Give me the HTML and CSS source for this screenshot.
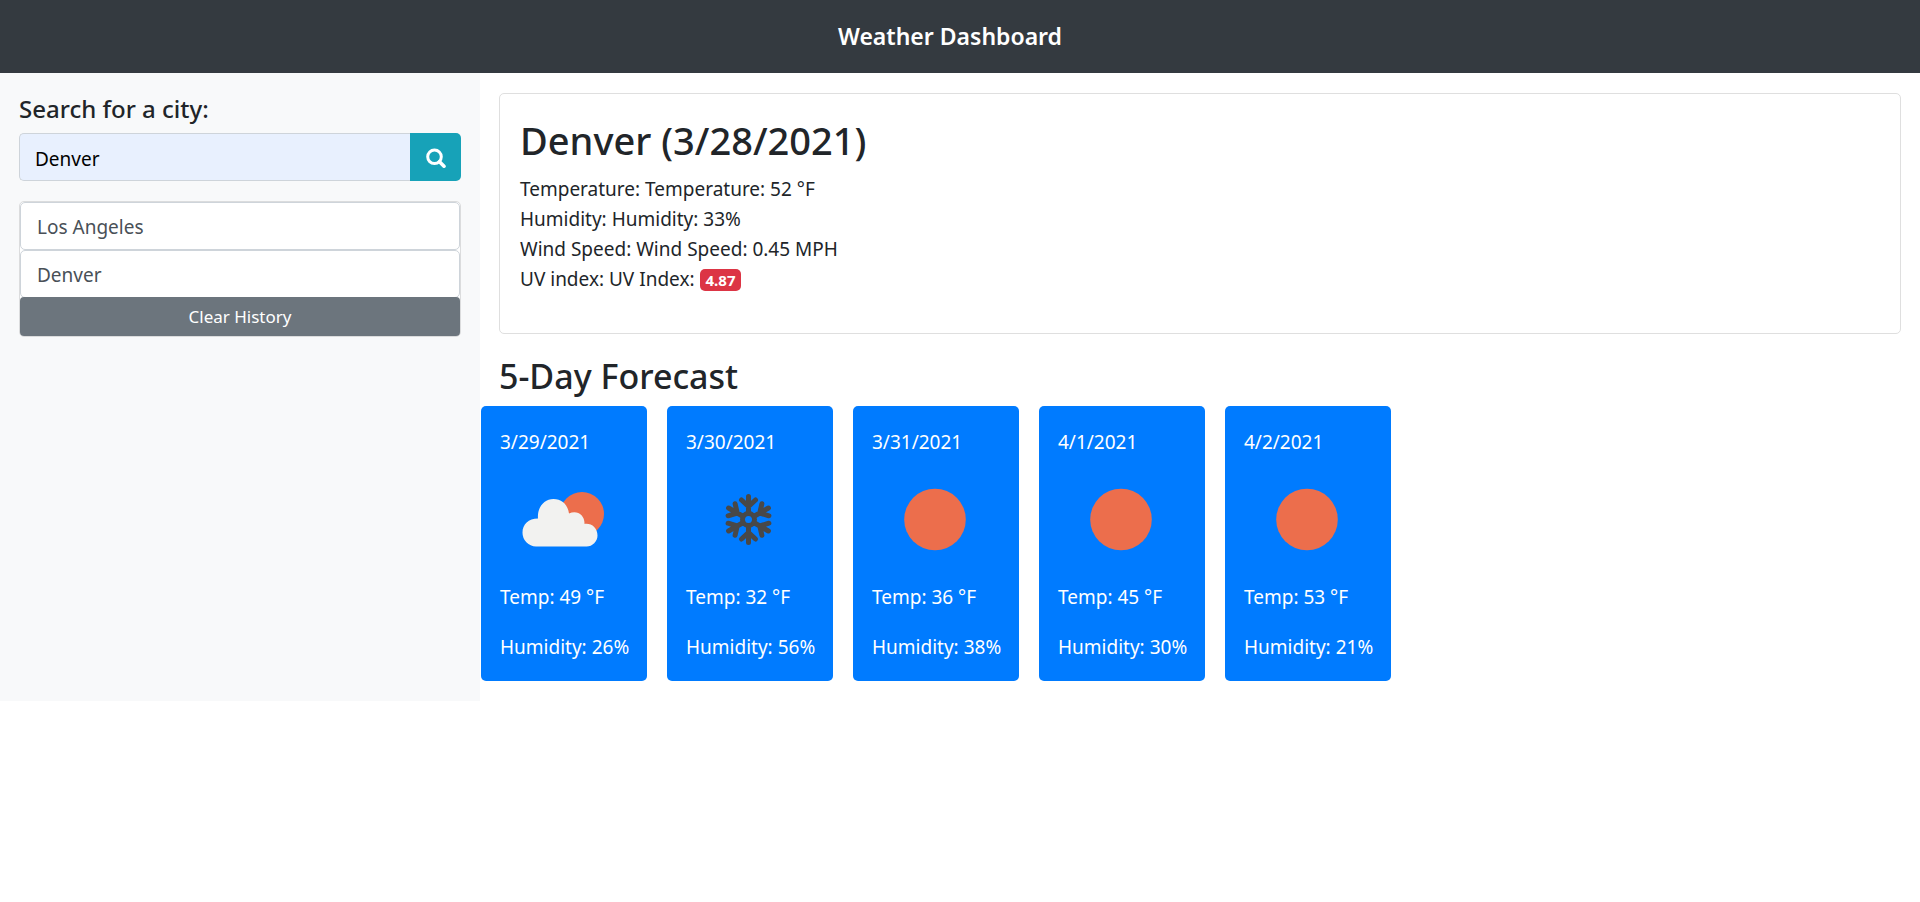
FILE: index.html
```html
<!DOCTYPE html>
<html lang="en">
<head>
<meta charset="utf-8">
<meta name="viewport" content="width=device-width, initial-scale=1">
<title>Weather Dashboard</title>
<link rel="stylesheet" href="styles.css">
</head>
<body>
<svg class="sprite" aria-hidden="true">
  <symbol id="sun" viewBox="0 0 125 125"><circle cx="63" cy="62.500" r="30.800" fill="#ec6e4c"/></symbol>
  <symbol id="cloud" viewBox="0 0 125 125">
    <circle cx="82" cy="57" r="22" fill="#ec6e4c"/>
    <path fill="#f2f2f0" d="M36 89.500a13.800 13.800 0 0 1-13.500-14c0-8 6-14 15.500-14-1-11 6-19.500 15.500-19.500 8.500 0 14.500 6 15.500 14.500 8-4 16 1.500 15.500 10.500 7-1 13 4 13 11.500 0 6-5 11-11 11z"/>
  </symbol>
  <symbol id="snow" viewBox="0 0 125 125">
    <g fill="none" stroke="#484848" stroke-width="5" stroke-linecap="round">
      <circle cx="62.500" cy="62.500" r="6" stroke-width="5"/>
      <path id="arm" d="M62.500 56V39.500M62.500 49.500l-7-6.500M62.500 49.500l7-6.500"/>
      <use href="#arm" transform="rotate(60 62.500 62.500)"/>
      <use href="#arm" transform="rotate(120 62.500 62.500)"/>
      <use href="#arm" transform="rotate(180 62.500 62.500)"/>
      <use href="#arm" transform="rotate(240 62.500 62.500)"/>
      <use href="#arm" transform="rotate(300 62.500 62.500)"/>
    </g>
  </symbol>
</svg>

<header class="navbar"><h1 class="brand">Weather Dashboard</h1></header>

<div class="layout">
  <aside class="sidebar">
    <form class="search">
      <label class="search-label" for="city">Search for a city:</label>
      <div class="search-group">
        <input class="search-input" id="city" type="text" value="Denver">
        <button class="search-button" type="button" aria-label="Search">
          <svg class="search-icon" viewBox="0 0 20 20" aria-hidden="true"><g fill="none" stroke="currentColor"><circle cx="8.500" cy="8.800" r="6.800" stroke-width="3"/><path d="M13.500 13.800 18 18.200" stroke-width="3.600" stroke-linecap="round"/></g></svg>
        </button>
      </div>
    </form>
    <div class="history">
      <input class="history-item" type="text" readonly aria-label="Recent city 1" value="Los Angeles">
      <input class="history-item" type="text" readonly aria-label="Recent city 2" value="Denver">
      <button class="clear-button" type="button">Clear History</button>
    </div>
  </aside>

  <main class="content">
    <section class="current">
      <h2 class="city">Denver (3/28/2021)</h2>
      <p class="reading">Temperature: Temperature: 52 °F</p>
      <p class="reading">Humidity: Humidity: 33%</p>
      <p class="reading">Wind Speed: Wind Speed: 0.45 MPH</p>
      <p class="reading">UV index: UV Index: <span class="badge">4.87</span></p>
    </section>
    <h2 class="forecast-title">5-Day Forecast</h2>
    <section class="forecast">
      <article class="day"><p>3/29/2021</p><svg class="icon" role="img" aria-label="Partly cloudy"><use href="#cloud"/></svg><p>Temp: 49 °F</p><p class="humidity">Humidity: 26%</p></article>
      <article class="day"><p>3/30/2021</p><svg class="icon" role="img" aria-label="Snow"><use href="#snow"/></svg><p>Temp: 32 °F</p><p class="humidity">Humidity: 56%</p></article>
      <article class="day"><p>3/31/2021</p><svg class="icon" role="img" aria-label="Clear"><use href="#sun"/></svg><p>Temp: 36 °F</p><p class="humidity">Humidity: 38%</p></article>
      <article class="day"><p>4/1/2021</p><svg class="icon" role="img" aria-label="Clear"><use href="#sun"/></svg><p>Temp: 45 °F</p><p class="humidity">Humidity: 30%</p></article>
      <article class="day"><p>4/2/2021</p><svg class="icon" role="img" aria-label="Clear"><use href="#sun"/></svg><p>Temp: 53 °F</p><p class="humidity">Humidity: 21%</p></article>
    </section>
  </main>
</div>
</body>
</html>
```
FILE: styles.css
```css
* { box-sizing: border-box; }
body {
  margin: 0;
  background: #fff;
  color: #212529;
  font: 400 19px/30px "Segoe UI", "Noto Sans", sans-serif;
}
h1, h2, p { margin: 0; }
input, button { font: inherit; margin: 0; }
.sprite { position: absolute; width: 0; height: 0; }

.navbar {
  background: #343a40;
  color: #fff;
  padding: 21px 40px 22px 20px;
  text-align: center;
}
.brand { font-size: 23px; line-height: 30px; font-weight: 600; }

.layout { display: flex; align-items: stretch; }
.sidebar { flex: 0 0 25%; background: #f8f9fa; padding: 20px 19px; }
.content { flex: 1; min-width: 0; padding: 20px 19px; }

.search-label {
  display: block;
  font-size: 24px;
  line-height: 32px;
  font-weight: 500;
  margin-bottom: 8px;
}
.search-group { display: flex; }
.search-input {
  flex: 1;
  min-width: 0;
  height: 48px;
  padding: 4px 15px 0;
  border: 1px solid #ced4da;
  border-right: 0;
  border-radius: 5px 0 0 5px;
  background: #e8f0fe;
  color: #000;
}
.search-button {
  display: flex;
  align-items: center;
  justify-content: center;
  width: 51px;
  padding: 2px 0 0;
  border: 0;
  border-radius: 0 5px 5px 0;
  background: #17a2b8;
  color: #fff;
}
.search-icon { width: 20px; height: 20px; }

.history {
  display: flex;
  flex-direction: column;
  margin-top: 20px;
  border: 1px solid #dbdcdd;
  border-radius: 5px;
  background: #fff;
}
.history-item {
  width: 100%;
  height: 48px;
  padding: 2px 16px 0;
  border: 1px solid #ced4da;
  border-radius: 5px;
  background: #fff;
  color: #495057;
}
.clear-button {
  height: 39px;
  margin-top: -1px;
  border: 0;
  border-radius: 4px;
  background: #6c757d;
  color: #fff;
  font-size: 17px;
}

.current {
  padding: 20px 20px 39px;
  border: 1px solid #dfdfdf;
  border-radius: 5px;
}
.city { font-size: 38px; line-height: 52px; font-weight: 500; margin-bottom: 8px; }
.badge {
  display: inline-block;
  padding: 4px 6px;
  border-radius: 5px;
  background: #dc3545;
  color: #fff;
  font-size: 15px;
  line-height: 14px;
  font-weight: 700;
}

.forecast-title { margin: 20px 0 8px; font-size: 34px; line-height: 44px; font-weight: 500; }
.forecast { display: flex; flex-wrap: wrap; gap: 20px; margin-left: -18px; }
.day {
  width: 166px;
  padding: 21px 0 19px 19px;
  border-radius: 5px;
  background: #007bff;
  color: #fff;
  white-space: nowrap;
}
.icon { display: block; width: 125px; height: 125px; }
.humidity { margin-top: 20px; }
```
